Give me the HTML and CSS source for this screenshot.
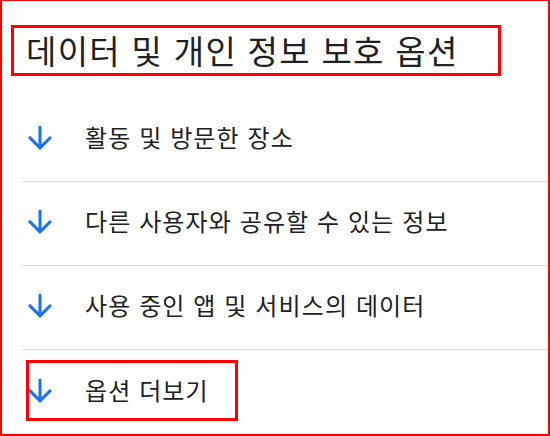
FILE: index.html
```html
<!DOCTYPE html>
<html lang="ko">
<head>
<meta charset="utf-8">
<link rel="stylesheet" href="styles.css">
</head>
<body>
<div class="frame">
  <div class="title-box"><h1 class="title">데이터 및 개인 정보 보호 옵션</h1></div>
  <ul class="list">
    <li class="row">
      <svg class="icon" viewBox="0 0 24 24"><path d="M20 12l-1.41-1.41L13 16.17V4h-2v12.17l-5.58-5.59L4 12l8 8 8-8z"/></svg>
      <span class="label">활동 및 방문한 장소</span>
    </li>
    <li class="row">
      <svg class="icon" viewBox="0 0 24 24"><path d="M20 12l-1.41-1.41L13 16.17V4h-2v12.17l-5.58-5.59L4 12l8 8 8-8z"/></svg>
      <span class="label">다른 사용자와 공유할 수 있는 정보</span>
    </li>
    <li class="row">
      <svg class="icon" viewBox="0 0 24 24"><path d="M20 12l-1.41-1.41L13 16.17V4h-2v12.17l-5.58-5.59L4 12l8 8 8-8z"/></svg>
      <span class="label">사용 중인 앱 및 서비스의 데이터</span>
    </li>
    <li class="row last">
      <svg class="icon" viewBox="0 0 24 24"><path d="M20 12l-1.41-1.41L13 16.17V4h-2v12.17l-5.58-5.59L4 12l8 8 8-8z"/></svg>
      <span class="label">옵션 더보기</span>
      <div class="highlight"></div>
    </li>
  </ul>
</div>
</body>
</html>
```
FILE: styles.css
```css
* { box-sizing: border-box; }
html, body { margin: 0; padding: 0; background: #fff; }
body { font-family: "Noto Sans CJK KR", "Noto Sans", sans-serif; }
.frame {
  width: 550px;
  height: 436px;
  border: 2px solid #ff0000;
  border-top-width: 1px;
  overflow: hidden;
}
.title-box {
  margin: 24px 0 0 9px;
  width: 490px;
  height: 51px;
  border: 3px solid #ff0000;
  display: flex;
  align-items: center;
  padding-left: 12px;
}
.title {
  margin: 0 0 1px 0;
  font-size: 33px;
  font-weight: 400;
  letter-spacing: 1.3px;
  color: #202124;
  line-height: 1;
  white-space: nowrap;
}
.list {
  list-style: none;
  margin: 22px 0 0 20px;
  padding: 0;
}
.row {
  position: relative;
  display: flex;
  align-items: center;
  height: 84px;
  padding-bottom: 3px;
  border-bottom: 1px solid #dadce0;
}
.row.last { border-bottom: none; padding-bottom: 2px; }
.icon {
  width: 36px;
  height: 36px;
  fill: #1a73e8;
  flex: none;
}
.label {
  margin-left: 27px;
  padding-bottom: 4px;
  font-size: 24px;
  letter-spacing: 1.1px;
  color: #202124;
  white-space: nowrap;
}
.highlight {
  position: absolute;
  left: 4px;
  top: 10px;
  width: 212px;
  height: 61px;
  border: 3px solid #ff0000;
}
```
